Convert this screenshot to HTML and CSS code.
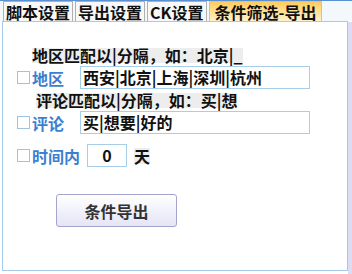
FILE: index.html
```html
<!DOCTYPE html>
<html lang="zh-CN">
<head>
  <meta charset="UTF-8">
  <title>条件筛选-导出</title>
  <link rel="stylesheet" href="styles.css">
</head>
<body>
  <div class="window">
    <div class="tabs">
      <div class="tab">脚本设置</div>
      <div class="tab">导出设置</div>
      <div class="tab">CK设置</div>
      <div class="tab active">条件筛选-导出</div>
    </div>
    <div class="frame">
      <div class="panel">
        <div class="hint hint-area">地区匹配以|分隔，如：北京|_</div>
        <div class="row row-area">
          <span class="check"></span>
          <span class="check-label">地区</span>
          <div class="field">西安|北京|上海|深圳|杭州</div>
        </div>
        <div class="hint hint-comment">评论匹配以|分隔，如：买|想</div>
        <div class="row row-comment">
          <span class="check"></span>
          <span class="check-label">评论</span>
          <div class="field">买|想要|好的</div>
        </div>
        <div class="row row-time">
          <span class="check"></span>
          <span class="check-label">时间内</span>
          <div class="field field-num">0</div>
          <span class="unit">天</span>
        </div>
        <button class="export-btn">条件导出</button>
      </div>
      <div class="edge"></div>
    </div>
  </div>
</body>
</html>
```

FILE: styles.css
```css
body {
  margin: 0;
  background: #ffffff;
  font-family: 'Noto Sans CJK SC', 'DejaVu Sans', sans-serif;
  font-size: 16px;
  font-weight: bold;
  color: #111;
}

.window {
  width: 352px;
  height: 274px;
  overflow: hidden;
}

.tabs {
  display: flex;
  height: 21px;
  padding-left: 3px;
  background: #f3f8fd;
  border-top: 1px solid #5a8fd0;
  box-sizing: border-box;
}

.tab {
  height: 20px;
  line-height: 20px;
  padding: 0 2px;
  margin-right: 2px;
  border: 1px solid #b0b0b0;
  border-bottom: none;
  background: #f8f8f8;
  white-space: nowrap;
  box-sizing: border-box;
}

.tab.active {
  margin-right: 0;
  padding: 0 5px;
  border-color: #e8c070;
  background: linear-gradient(#ffcc5e, #ffe29a 55%, #fff2cc);
}

.frame {
  display: flex;
  height: 253px;
}

.panel {
  width: 344px;
  height: 248px;
  margin-left: 2px;
  border: 1px solid #a6cbe8;
}

.edge {
  width: 4px;
  background: #dcdcf4;
  margin-top: 1px;
}

.hint {
  width: max-content;
  height: 15px;
  line-height: 15px;
  background: #ededed;
  white-space: nowrap;
}

.hint-area {
  margin: 26px 0 0 29px;
}

.hint-comment {
  margin: 4px 0 0 33px;
}

.row {
  display: flex;
  align-items: center;
  height: 23px;
  padding-left: 14px;
}

.row-area {
  margin-top: 3px;
}

.row-comment {
  margin-top: 3px;
}

.row-time {
  margin-top: 10px;
}

.check {
  width: 11px;
  height: 11px;
  border: 1px solid #9dc3e3;
  background: #fff;
  margin-right: 2px;
}

.check-label {
  color: #3c7fd0;
  width: 48px;
  white-space: nowrap;
}

.field {
  width: 226px;
  height: 21px;
  line-height: 21px;
  border: 1px solid #a8cde8;
  padding-left: 2px;
  white-space: nowrap;
  overflow: hidden;
}

.field-num {
  width: 38px;
  padding: 0;
  margin-left: 7px;
  text-align: center;
}

.unit {
  margin-left: 7px;
  background: #ededed;
  line-height: 16px;
}

.export-btn {
  display: block;
  width: 121px;
  height: 33px;
  margin: 27px 0 0 53px;
  border: 1px solid #a4a4cc;
  border-radius: 3px;
  background: linear-gradient(#ffffff, #f4f4fc 40%, #e4e4f6);
  font-family: inherit;
  font-size: 16px;
  font-weight: bold;
  color: #333;
}
```
